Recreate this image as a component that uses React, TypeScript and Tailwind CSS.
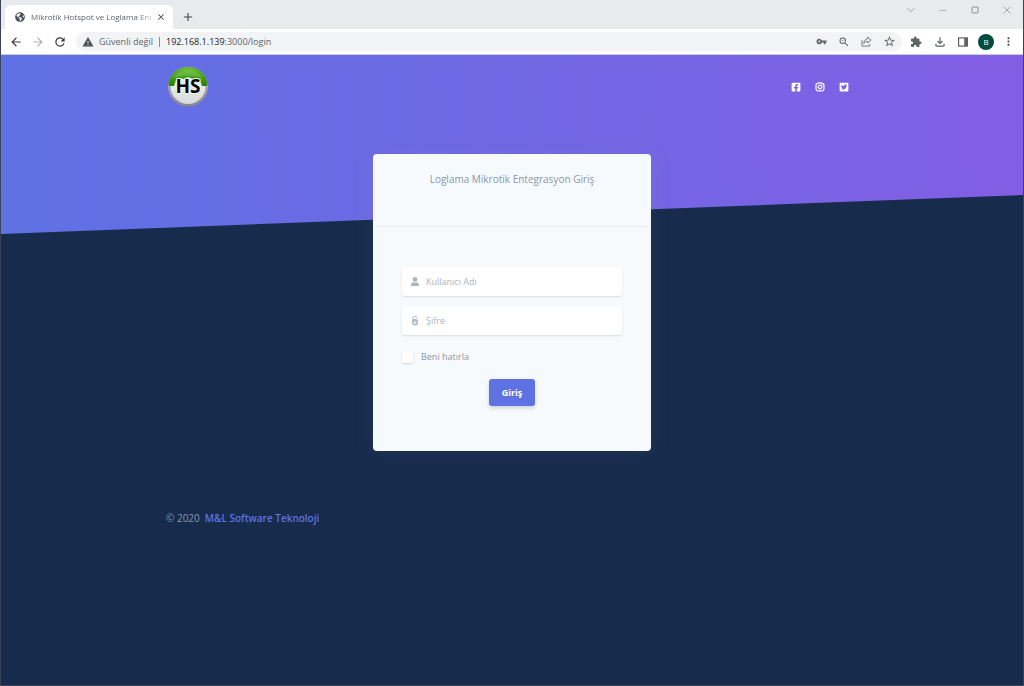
import React from "react";
import {
  MdArrowBack,
  MdArrowForward,
  MdRefresh,
  MdWarning,
  MdVpnKey,
  MdZoomOut,
  MdStarBorder,
  MdExtension,
  MdOutlineFileDownload,
  MdMoreVert,
  MdClose,
  MdAdd,
} from "react-icons/md";
import { FaFacebookSquare, FaGlobeAmericas, FaInstagram, FaTwitterSquare } from "react-icons/fa";

function TabStrip() {
  return (
    <div className="flex h-[29px] items-stretch bg-[#e8eaed] pl-1">
      <div className="mt-[5px] flex w-[168px] items-center rounded-t-md bg-white pl-[10px] pr-[7px]">
        <FaGlobeAmericas className="size-[10px] shrink-0 text-[#4d5156]" />
        <span className="ml-1.5 flex-1 whitespace-nowrap text-[8px] text-[#5f6368] [mask-image:linear-gradient(to_right,black_85%,transparent)]">
          Mikrotik Hotspot ve Loglama Ent
        </span>
        <button type="button" aria-label="Sekmeyi kapat" className="text-[#45494d]">
          <MdClose className="size-[10px]" />
        </button>
      </div>
      <button type="button" aria-label="Yeni sekme" className="ml-2 mt-[5px] text-[#45494d]">
        <MdAdd className="size-[14px]" />
      </button>
      <div className="ml-auto flex h-5 items-center gap-[22px] pr-[11px] text-[#a0a2a6]">
        <button type="button" aria-label="Sekme ara">
          <svg viewBox="0 0 10 10" className="size-[10px]" fill="none" stroke="currentColor">
            <path d="M1.5 3.2 5 6.7l3.5-3.5" />
          </svg>
        </button>
        <button type="button" aria-label="Küçült">
          <svg viewBox="0 0 10 10" className="size-[10px] text-[#b4b6ba]" fill="none" stroke="currentColor">
            <path d="M1.5 5.5h7" />
          </svg>
        </button>
        <button type="button" aria-label="Ekranı kapla">
          <svg viewBox="0 0 10 10" className="size-[10px] text-[#8f9195]" fill="none" stroke="currentColor">
            <rect x="2" y="2" width="6" height="6" rx=".5" />
          </svg>
        </button>
        <button type="button" aria-label="Kapat">
          <svg viewBox="0 0 10 10" className="size-[10px]" fill="none" stroke="currentColor" strokeWidth=".9">
            <path d="M1.5 1.5l7 7m0-7-7 7" />
          </svg>
        </button>
      </div>
    </div>
  );
}

function Toolbar() {
  return (
    <div className="flex h-[26px] items-center border-b border-[#c9cbe0] bg-white pl-2 pr-2 text-[#5f6368]">
      <div className="flex items-center gap-2">
        <button type="button" aria-label="Geri">
          <MdArrowBack className="size-[14px] text-[#3c4043]" />
        </button>
        <button type="button" aria-label="İleri">
          <MdArrowForward className="size-[14px] text-[#b0b3b7]" />
        </button>
        <button type="button" aria-label="Yenile">
          <MdRefresh className="size-[14px] text-[#3c4043]" />
        </button>
      </div>
      <div className="ml-[9px] flex h-[19px] flex-1 items-center rounded-full bg-[#f1f3f4] px-1.5 text-[9px]">
        <MdWarning className="size-3 text-[#4d5156]" />
        <span className="ml-[5px]">Güvenli değil</span>
        <span className="mx-1.5 h-[10px] w-px bg-[#8b8e92]" />
        <span className="flex-1">
          <span className="text-[#202124]">192.168.1.139</span>:3000/login
        </span>
        <div className="flex items-center gap-[11px]">
          <button type="button" aria-label="Şifreler">
            <MdVpnKey className="size-[11px]" />
          </button>
          <button type="button" aria-label="Yakınlaştırma">
            <MdZoomOut className="size-3" />
          </button>
          <button type="button" aria-label="Paylaş">
            <svg viewBox="0 0 12 12" className="size-[11px]" fill="none" stroke="currentColor" strokeWidth=".9" strokeLinejoin="round">
              <path d="M1 4.5V11h8.5V8.8" />
              <path d="M7.4 1.2 11 4.4 7.4 7.6V5.8C5.2 5.8 4 6.6 3 8.3 3.2 5.2 4.6 3.4 7.4 3z" />
            </svg>
          </button>
          <button type="button" aria-label="Yer işareti">
            <MdStarBorder className="size-[13px]" />
          </button>
        </div>
      </div>
      <div className="ml-2 flex items-center gap-[11px]">
        <button type="button" aria-label="Uzantılar">
          <MdExtension className="size-3" />
        </button>
        <button type="button" aria-label="İndirilenler">
          <MdOutlineFileDownload className="size-[14px]" />
        </button>
        <div className="flex items-center gap-[10px]">
          <button type="button" aria-label="Yan panel">
            <svg viewBox="0 0 10 10" className="size-[10px]">
              <rect x=".6" y=".9" width="8.8" height="8.2" fill="none" stroke="currentColor" strokeWidth="1.2" />
              <rect x="6.2" y="1" width="3.2" height="8" fill="currentColor" />
            </svg>
          </button>
          <button
            type="button"
            aria-label="Profil"
            className="flex size-4 items-center justify-center rounded-full bg-[#004d40] text-[8px] text-white"
          >
            B
          </button>
        </div>
      </div>
      <button type="button" aria-label="Menü" className="ml-2">
        <MdMoreVert className="size-[13px] text-[#4d5156]" />
      </button>
    </div>
  );
}

function Logo() {
  return (
    <svg viewBox="0 0 42 42" className="size-[42px]" role="img" aria-label="HS">
      <defs>
        <linearGradient id="rim" x1="0" y1="0" x2="0" y2="1">
          <stop offset="0" stopColor="#6d9a78" />
          <stop offset=".4" stopColor="#5b8c58" />
          <stop offset=".5" stopColor="#a3a5ab" />
          <stop offset="1" stopColor="#85878f" />
        </linearGradient>
        <linearGradient id="green" x1="0" y1="0" x2="0" y2="1">
          <stop offset="0" stopColor="#6cbb3a" />
          <stop offset=".55" stopColor="#3f9f14" />
          <stop offset="1" stopColor="#238000" />
        </linearGradient>
        <linearGradient id="silver" x1="0" y1="0" x2="0" y2="1">
          <stop offset="0" stopColor="#f4f6f3" />
          <stop offset="1" stopColor="#d8dadb" />
        </linearGradient>
      </defs>
      <circle cx="21" cy="20.5" r="20" fill="url(#rim)" />
      <circle cx="21" cy="20.5" r="17.5" fill="url(#silver)" />
      <path d="M2 20A19 19 0 0 1 40 20H35l-2-6-3-2-4 1-5-2-4 2-5-1-3 2-2 6z" fill="url(#green)" />
      <path d="M6 12Q21-5 36 12 21 7 6 12z" fill="#a2dd78" opacity=".3" />
      <g fontFamily="Open Sans, sans-serif" fontSize="19" fontWeight="700" textAnchor="middle">
        <text x="21" y="27" fill="#eef2ec" stroke="#eef2ec" strokeWidth="2" strokeLinejoin="round">HS</text>
        <text x="21" y="27" fill="#050505">HS</text>
      </g>
    </svg>
  );
}

function Field({ id, label, type, icon }: { id: string; label: string; type: string; icon: React.ReactNode }) {
  return (
    <div className="flex h-[29px] items-center rounded-[3px] bg-white pl-2 shadow-[0_1px_2px_rgba(50,50,93,0.15)]">
      <label htmlFor={id} aria-label={label} className="text-[#adb5bd]">
        {icon}
      </label>
      <input
        id={id}
        type={type}
        placeholder={label}
        className="ml-1.5 h-full min-w-0 flex-1 bg-transparent pr-2 text-[9px] text-[#8898aa] outline-none placeholder:text-[#adb5bd]"
      />
    </div>
  );
}

function LoginCard() {
  return (
    <section className="mx-auto w-full max-w-[278px] rounded bg-[#f7fafc] shadow-[0_0_22px_rgba(136,152,170,0.1)]">
      <h1 className="border-b border-[#e9edf2] pb-[39px] pt-[17px] text-center text-[10px] leading-4 text-[#8898aa]">
        Loglama Mikrotik Entegrasyon Giriş
      </h1>
      <form className="flex flex-col px-[29px] pb-[45px] pt-10" onSubmit={(e) => e.preventDefault()}>
        <div className="flex flex-col gap-[10px]">
          <Field
            id="username"
            label="Kullanıcı Adı"
            type="text"
            icon={
              <svg viewBox="0 0 10 10" className="size-[10px]" fill="currentColor">
                <circle cx="5" cy="2.4" r="2.4" />
                <path d="M1 9V7.8C1 6.6 2.4 5.6 3.6 5.3q1.4.7 2.8 0C7.6 5.6 9 6.6 9 7.8V9z" />
              </svg>
            }
          />
          <Field
            id="password"
            label="Şifre"
            type="password"
            icon={
              <svg viewBox="0 0 10 10" className="size-[10px]" fill="none" stroke="currentColor">
                <path d="M2.8 4.8V2.5a2 2 0 0 1 4-.2" strokeWidth="1" />
                <circle cx="5" cy="6.2" r="2.3" strokeWidth="1.6" />
                <path d="M5 5v1.6" strokeWidth="1" />
              </svg>
            }
          />
        </div>
        <label className="mt-4 flex items-center gap-2 text-[9px] leading-3 text-[#8898aa]">
          <input
            type="checkbox"
            className="size-[11px] appearance-none rounded-[2px] bg-white shadow-[0_1px_2px_rgba(50,50,93,0.2)] checked:bg-[#5e72e4]"
          />
          Beni hatırla
        </label>
        <button
          type="submit"
          className="mt-4 h-[27px] self-center rounded-[3px] bg-[#5e72e4] px-[13px] text-[9px] font-bold text-white shadow-[0_2px_4px_rgba(50,50,93,0.2)]"
        >
          Giriş
        </button>
      </form>
    </section>
  );
}

export default function App() {
  return (
    <div className="flex min-h-screen flex-col border-x border-b border-[#3a4258] bg-[#172b4d] font-['Open_Sans',sans-serif]">
      <TabStrip />
      <Toolbar />
      <main className="relative isolate flex-1">
        <div
          aria-hidden="true"
          className="absolute inset-x-0 top-0 -z-10 h-[179px] bg-[linear-gradient(87deg,#5e72e4,#825ee4)] [clip-path:polygon(0_0,100%_0,100%_140px,0_100%)]"
        />
        <header className="mx-auto flex w-full max-w-[692px] items-center justify-between px-px pt-[11px]">
          <a href="#home">
            <Logo />
          </a>
          <nav className="flex gap-[14px] pr-2 text-white">
            <a href="#facebook" aria-label="Facebook">
              <FaFacebookSquare className="size-[10px]" />
            </a>
            <a href="#instagram" aria-label="Instagram">
              <FaInstagram className="size-[10px] stroke-current stroke-[20]" />
            </a>
            <a href="#twitter" aria-label="Twitter">
              <FaTwitterSquare className="size-[10px]" />
            </a>
          </nav>
        </header>
        <div className="pt-[46px]">
          <LoginCard />
        </div>
        <footer className="mx-auto w-full max-w-[692px] pt-[59px] text-[10px] leading-4 text-[#8898aa]">
          © 2020
          <a href="#company" className="ml-[5px] font-semibold text-[#5e72e4]">
            M&amp;L Software Teknoloji
          </a>
        </footer>
      </main>
    </div>
  );
}
